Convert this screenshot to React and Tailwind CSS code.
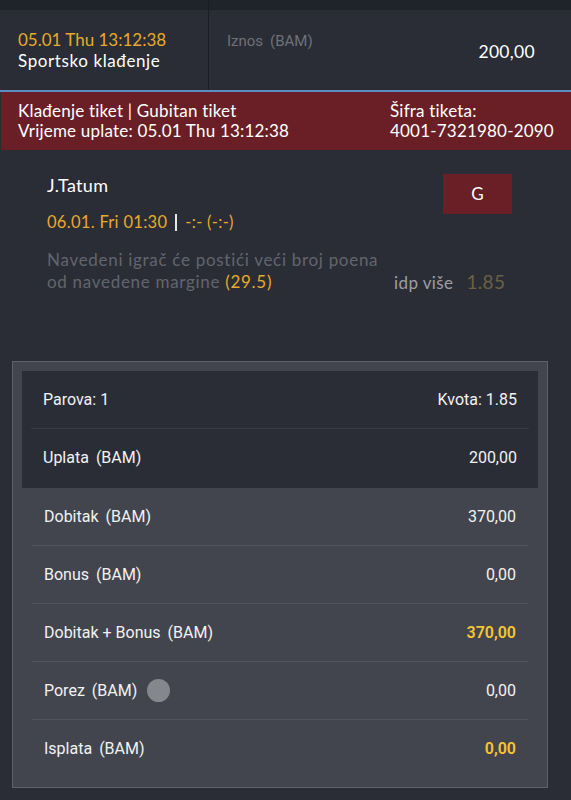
const rows = [
  { label: 'Dobitak', value: '370,00' },
  { label: 'Bonus', value: '0,00' },
  { label: 'Dobitak + Bonus', value: '370,00', gold: true },
  { label: 'Porez', value: '0,00', info: true },
  { label: 'Isplata', value: '0,00', gold: true, last: true },
];

function SummaryRow({ label, value, gold, info, last }) {
  return <div className={`flex items-center justify-between h-[58px] mx-[19px] px-[12px] ${last ? '' : 'border-b border-[#52555e]'}`}>
      <div className="flex items-center">
        <span>{label}</span>
        <span className="ml-[7px]">(BAM)</span>
        {info && <span className="ml-[10px] w-[23px] h-[23px] rounded-full bg-[#85878d]" />}
      </div>
      <span className={gold ? 'text-[#f7c531] font-semibold' : ''}>{value}</span>
    </div>;
}

export default function App() {
  return <div className="w-[571px] h-[800px] bg-[#2a2d36] text-white overflow-hidden font-['Lato','Open_Sans',sans-serif]">
      <div className="h-[10px] bg-[#1f232a] flex">
        <div className="w-[209px] border-r border-[#191c22]" />
      </div>

      <div className="flex h-[82px] border-b-2 border-[#5b8ec4]">
        <div className="w-[209px] border-r border-[#1b1e24] pl-[18px] pt-[19px] text-[17px] leading-[21px]">
          <div className="text-[#e9a92a]">05.01 Thu 13:12:38</div>
          <div className="tracking-[0.6px]">Sportsko klađenje</div>
        </div>
        <div className="flex-1 flex justify-between pl-[18px] pr-[36px] pt-[20px]">
          <div className="text-[15px] text-[#6e7179] font-['Roboto',sans-serif]">Iznos<span className="ml-[7px]">(BAM)</span></div>
          <div className="text-[17.5px] pt-[9px] tracking-[0.3px]">200,00</div>
        </div>
      </div>

      <div className="h-[58px] bg-[#6a1f26] ml-px flex pl-[17px] pt-[9px] text-[17px] leading-[20px] tracking-[0.2px]">
        <div className="w-[372px]">
          <div>Klađenje tiket | Gubitan tiket</div>
          <div>Vrijeme uplate: 05.01 Thu 13:12:38</div>
        </div>
        <div>
          <div>Šifra tiketa:</div>
          <div>4001-7321980-2090</div>
        </div>
      </div>

      <div className="flex pl-[47px] pt-[24px] pr-[59px] h-[211px]">
        <div className="flex-1">
          <div className="text-[18px] leading-[22px] tracking-[0.3px]">J.Tatum</div>
          <div className="mt-[14px] text-[16.5px] tracking-[0.3px] text-[#e9a92a] flex items-center">
            <span>06.01. Fri 01:30</span>
            <span className="mx-[8px] w-[2px] h-[17px] bg-[#e6e6e6]" />
            <span>-:- (-:-)</span>
          </div>
          <p className="mt-[14px] text-[17px] leading-[22px] tracking-[0.7px] text-[#62656d] w-[345px]">
            Navedeni igrač će postići veći broj poena od navedene margine <span className="text-[#e9a92a]">(29.5)</span>
          </p>
        </div>
        <div className="w-[118px] flex flex-col">
          <div className="self-end w-[69px] h-[40px] bg-[#6a1f26] flex items-center justify-center text-[17px]">G</div>
          <div className="mt-[54px] flex items-center">
            <span className="text-[17px] tracking-[0.4px] text-[#9c9ea4]">idp više</span>
            <span className="ml-[13px] text-[19px] tracking-[0.3px] text-[#6b6044]">1.85</span>
          </div>
        </div>
      </div>

      <div className="ml-[12px] w-[536px] h-[427px] border border-[#5e616a] bg-[#42454e] pt-[9px] text-[16px] font-['Roboto',sans-serif] text-[#f2f2f2]">
        <div className="mx-[9px] bg-[#2a2d36] h-[117px] flex flex-col">
          <div className="flex items-center justify-between h-[58px] mx-[9px] px-[12px] border-b border-[#363942]">
            <span>Parova: 1</span>
            <span>Kvota: 1.85</span>
          </div>
          <div className="flex items-center justify-between h-[58px] px-[21px]">
            <span>Uplata<span className="ml-[7px]">(BAM)</span></span>
            <span>200,00</span>
          </div>
        </div>
        {rows.map(r => <SummaryRow key={r.label} {...r} />)}
      </div>
    </div>;
}
